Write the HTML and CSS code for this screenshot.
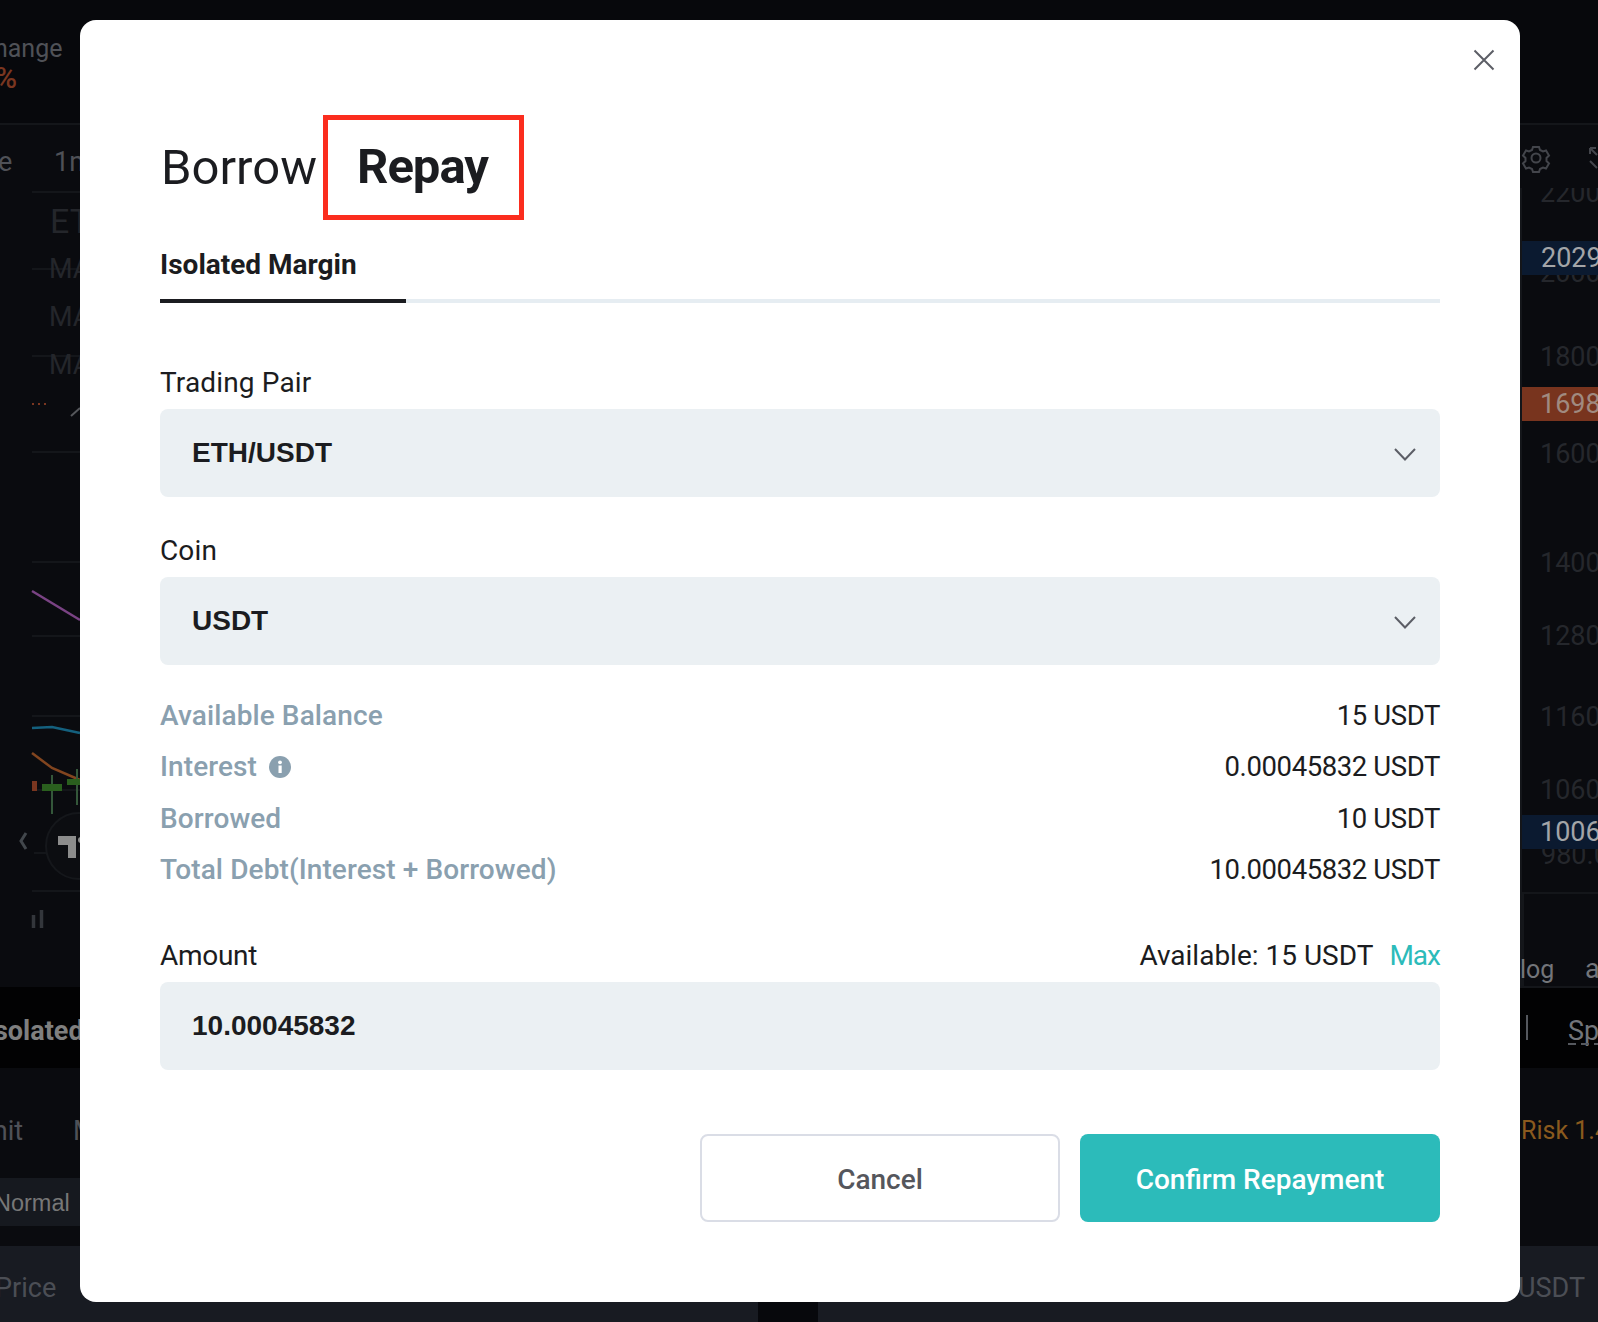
FILE: index.html
```html
<!DOCTYPE html>
<html lang="en">
<head>
<meta charset="utf-8">
<title>Repay</title>
<link rel="stylesheet" href="styles.css">
</head>
<body>
<svg class="backdrop" width="1598" height="1322" viewBox="0 0 1598 1322" aria-hidden="true">
  <rect class="bg-base" width="1598" height="1322"/>
  <rect class="bg-panel" y="124" width="1598" height="863"/>
  <rect class="bg-black" y="987" width="1598" height="81"/>
  <rect class="bg-panel" y="1068" width="1598" height="178"/>
  <rect class="bg-chip" y="1178" width="80" height="48"/>
  <rect class="bg-strip" y="1246" width="1598" height="76"/>
  <rect class="bg-base" x="758" y="1302" width="60" height="20"/>
  <path class="grid" d="M32 192H80M32 269H80M32 356H80M32 452H80M32 562H80M32 636H80M32 716H80M32 790H80M34 853H48M32 891H80M1520 893H1598M1520 987H1598M1521 188V987M1523 893V987"/>
  <text class="t-dim t-small" x="-6" y="57">hange</text>
  <text class="t-red" x="-5" y="88">%</text>
  <text class="t-dim" x="-2" y="171">e</text>
  <text class="t-dim" x="54" y="171">1m</text>
  <text class="t-faint t-big" x="50" y="233">ET</text>
  <text class="t-faint" x="49" y="278">MA</text>
  <text class="t-faint" x="49" y="326">MA</text>
  <text class="t-faint" x="49" y="374">MA</text>
  <path class="dots" d="M32 404h2M38 404h2M44 404h2"/>
  <path class="stroke-grey" d="M71 416L80 408"/>
  <path class="stroke-purple" d="M32 591L80 620"/>
  <path class="stroke-blue" d="M32 728L52 727L80 733"/>
  <path class="stroke-orange" d="M32 753L52 768L80 780"/>
  <rect class="c-red" x="32" y="781" width="5" height="10"/>
  <path class="c-wick" d="M52 775V814M77 769V805"/>
  <rect class="c-green" x="42" y="784" width="20" height="7"/>
  <rect class="c-green" x="67" y="779" width="13" height="6"/>
  <circle class="tv-ring" cx="79" cy="846" r="33"/>
  <path class="tv-mark" d="M58 836H76V858H68V845H58Z"/>
  <circle class="tv-mark" cx="81" cy="840" r="3"/>
  <path class="chev" d="M26 833L21 841L26 849"/>
  <path class="bars" d="M33.500 915V928M41.500 910V928"/>
  <text class="t-bold" x="-6" y="1040">solated</text>
  <text class="t-dim" x="-37" y="1140">Limit</text>
  <text class="t-dim" x="73" y="1140">M</text>
  <text class="t-normal" x="-6" y="1211">Normal</text>
  <text class="t-strip" x="-5" y="1297">Price</text>
  <text class="t-strip" x="1518" y="1297">USDT</text>
  <text class="t-axis" x="1540" y="202">2200</text>
  <rect class="bg-panel" x="1520" y="124" width="78" height="64"/>
  <path class="grid" d="M0 124H1598"/>
  <g class="gear">
    <circle cx="1536" cy="158" r="4.500"/>
    <path d="M1533 147h6l1 3 3 1.500 3-1 3 5-2.500 2.500v3l2.500 2.500-3 5-3-1-3 1.500-1 3h-6l-1-3-3-1.500-3 1-3-5 2.500-2.500v-3l-2.500-2.500 3-5 3 1 3-1.500z"/>
  </g>
  <path class="gear" d="M1590 148l7 7M1590 148v6M1590 148h6M1597 168l-7-7"/>
  <text class="t-axis" x="1540" y="282">2000</text>
  <rect class="chip-blue" x="1522" y="241" width="76" height="34"/>
  <text class="t-chip" x="1541" y="267">2029</text>
  <text class="t-axis" x="1540" y="366">1800</text>
  <rect class="chip-red" x="1522" y="387" width="76" height="34"/>
  <text class="t-chip t-chip-red" x="1540" y="413">1698</text>
  <text class="t-axis" x="1540" y="463">1600</text>
  <text class="t-axis" x="1540" y="572">1400</text>
  <text class="t-axis" x="1540" y="645">1280.</text>
  <text class="t-axis" x="1540" y="726">1160.</text>
  <text class="t-axis" x="1540" y="799">1060</text>
  <text class="t-axis" x="1541" y="864">980.0</text>
  <rect class="chip-blue" x="1522" y="815" width="76" height="34"/>
  <text class="t-chip" x="1540" y="841">1006</text>
  <text class="t-log t-small" x="1520" y="978">log</text>
  <text class="t-log" x="1585" y="978">a</text>
  <path class="bar-v" d="M1527 1015V1040"/>
  <text class="t-log" x="1568" y="1040">Spot</text>
  <path class="dash" d="M1568 1044H1598"/>
  <text class="t-risk" x="1521" y="1139">Risk 1.4</text>
</svg>

<div class="overlay">
  <main class="modal">
    <button class="close" type="button" aria-label="Close">
      <svg width="22" height="22" viewBox="0 0 22 22"><path d="M1.500 1.500L20.500 20.500M20.500 1.500L1.500 20.500"/></svg>
    </button>
    <div class="titles">
      <span class="title">Borrow</span>
      <span class="title title-active">Repay</span>
    </div>
    <div class="tabs"><span class="tab">Isolated Margin</span></div>

    <label class="field-label field-first">Trading Pair</label>
    <div class="select"><span>ETH/USDT</span><svg class="chevron" width="22" height="13" viewBox="0 0 22 13"><path d="M1 1L11 11.500L21 1"/></svg></div>

    <label class="field-label field-second">Coin</label>
    <div class="select"><span>USDT</span><svg class="chevron" width="22" height="13" viewBox="0 0 22 13"><path d="M1 1L11 11.500L21 1"/></svg></div>

    <dl class="stats">
      <div class="stat"><dt>Available Balance</dt><dd>15 USDT</dd></div>
      <div class="stat"><dt>Interest <svg class="info" width="22" height="22" viewBox="0 0 22 22"><circle cx="11" cy="11" r="11"/><rect class="info-i" x="9.500" y="9.500" width="3.200" height="7.500"/><circle class="info-i" cx="11" cy="6.300" r="1.900"/></svg></dt><dd>0.00045832 USDT</dd></div>
      <div class="stat"><dt>Borrowed</dt><dd>10 USDT</dd></div>
      <div class="stat"><dt>Total Debt(Interest + Borrowed)</dt><dd>10.00045832 USDT</dd></div>
    </dl>

    <div class="amount-head">
      <label class="field-label field-amount">Amount</label>
      <div class="avail"><span>Available: 15 USDT</span><a class="max">Max</a></div>
    </div>
    <div class="select"><span>10.00045832</span></div>

    <div class="actions">
      <button class="btn btn-cancel" type="button">Cancel</button>
      <button class="btn btn-confirm" type="button">Confirm Repayment</button>
    </div>
  </main>
</div>
</body>
</html>
```

FILE: styles.css
```css
* { box-sizing: border-box; }
html, body { margin: 0; padding: 0; }
body {
  width: 1598px;
  height: 1322px;
  overflow: hidden;
  position: relative;
  background: #08090d;
  font-family: Roboto, "Liberation Sans", sans-serif;
}

/* dimmed chart behind the dialog */
.backdrop { position: absolute; left: 0; top: 0; display: block; }
.backdrop text { font-family: Roboto, sans-serif; font-size: 27px; }
.backdrop .t-small { font-size: 25px; }
.bg-base { fill: #07080c; }
.bg-panel { fill: #0a0b0f; }
.bg-black { fill: #020203; }
.bg-chip { fill: #16191f; }
.bg-strip { fill: #181b22; }
.grid { stroke: #14161a; stroke-width: 2; fill: none; }
.t-dim { fill: #4f5157; }
.backdrop .t-red { fill: #7a3620; font-size: 30px; font-weight: 500; }
.t-faint { fill: #24262b; }
.backdrop .t-big { font-size: 34px; }
.dots { stroke: #7a3620; stroke-width: 2; fill: none; }
.stroke-grey { stroke: #55575b; stroke-width: 2; fill: none; }
.stroke-purple { stroke: #7a4384; stroke-width: 2.500; fill: none; }
.stroke-blue { stroke: #14607e; stroke-width: 2.500; fill: none; }
.stroke-orange { stroke: #82451f; stroke-width: 2.500; fill: none; }
.c-red { fill: #7a3620; }
.c-green { fill: #2a5f1e; }
.c-wick { stroke: #34573a; stroke-width: 2; fill: none; }
.tv-ring { fill: #0c0d11; stroke: #15171b; stroke-width: 2; }
.tv-mark { fill: #8c8c8c; }
.chev { stroke: #42474c; stroke-width: 3; fill: none; }
.bars { stroke: #33363b; stroke-width: 3.500; fill: none; }
.backdrop .t-bold { fill: #7f7f7f; font-weight: 700; }
.backdrop .t-normal { fill: #777; font-family: "Liberation Sans", sans-serif; font-size: 23.500px; }
.t-strip { fill: #4b4e55; }
.gear, .gear path, .gear circle { stroke: #43454b; stroke-width: 2; fill: none; }
.t-axis { fill: #25272c; }
.chip-blue { fill: #0b1a30; }
.chip-red { fill: #78341e; }
.t-chip { fill: #a3a5a8; }
.t-chip-red { fill: #a08a80; }
.t-log { fill: #73757a; }
.bar-v { stroke: #55585e; stroke-width: 2; fill: none; }
.dash { stroke: #55585e; stroke-width: 2; stroke-dasharray: 8 5; fill: none; }
.backdrop .t-risk { fill: #8a5a1e; font-size: 25px; }

/* dialog */
.overlay {
  position: relative;
  height: 1322px;
  padding: 20px 78px 20px 80px;
}
.modal {
  position: relative;
  height: 1282px;
  padding: 95px 80px 0;
  background: #fff;
  border-radius: 16px;
  color: #1b1c20;
  font-size: 28px;
}
.close {
  position: absolute;
  right: 25px;
  top: 29px;
  width: 22px;
  height: 22px;
  padding: 0;
  border: 0;
  background: none;
  display: flex;
}
.close path { stroke: #5c5e66; stroke-width: 2; fill: none; }

.titles { display: flex; align-items: center; height: 105px; }
.title { font-size: 49px; font-weight: 400; line-height: 60px; margin-left: 1px; }
.title-active {
  margin-left: 6px;
  width: 201px;
  height: 105px;
  padding: 0 2px 2px 0;
  display: flex;
  align-items: center;
  justify-content: center;
  border: 5px solid #fb2d1e;
  font-weight: 700;
  letter-spacing: -1px;
}

.tabs { margin-top: 21px; height: 62px; border-bottom: 4px solid #e6edf2; display: flex; }
.tab {
  width: 246px;
  height: 62px;
  padding-top: 4px;
  line-height: 40px;
  font-weight: 700;
  border-bottom: 4px solid #1b1c20;
}

.field-label { display: block; line-height: 36px; letter-spacing: 0.150px; }
.field-first { margin-top: 62px; margin-bottom: 8px; }
.field-second { margin-top: 36px; margin-bottom: 8px; }
.field-amount { letter-spacing: -0.300px; }

.select {
  height: 88px;
  padding: 0 24px 0 32px;
  display: flex;
  align-items: center;
  justify-content: space-between;
  background: #ebf0f3;
  border-radius: 8px;
  font-family: "Liberation Sans", sans-serif;
  font-weight: 700;
}
.chevron { margin-top: 2px; }
.chevron path { stroke: #5c5e66; stroke-width: 2; fill: none; }

.stats { margin: 25px 0 0; }
.stat { display: flex; justify-content: space-between; align-items: center; height: 51.330px; }
.stat dt { display: flex; align-items: center; gap: 12px; color: #8aa0af; font-weight: 500; letter-spacing: 0.100px; }
.stat dd { margin: 0; font-size: 27.500px; letter-spacing: -0.400px; }
.info circle { fill: #8aa0af; }
.info rect, .info .info-i { fill: #fff; }

.amount-head {
  margin-top: 43px;
  margin-bottom: 8px;
  display: flex;
  justify-content: space-between;
  align-items: center;
}
.avail { display: flex; gap: 16px; line-height: 36px; }
.max { color: #2cbbba; letter-spacing: -1px; }

.actions { margin-top: 64px; display: flex; justify-content: flex-end; gap: 20px; }
.btn {
  width: 360px;
  height: 88px;
  padding-top: 3px;
  border-radius: 8px;
  font-family: inherit;
  font-size: 28px;
  font-weight: 500;
}
.btn-cancel { background: #fff; border: 2px solid #dadde6; color: #55565c; }
.btn-confirm { background: #2cbbba; border: 0; color: #fff; }
```
